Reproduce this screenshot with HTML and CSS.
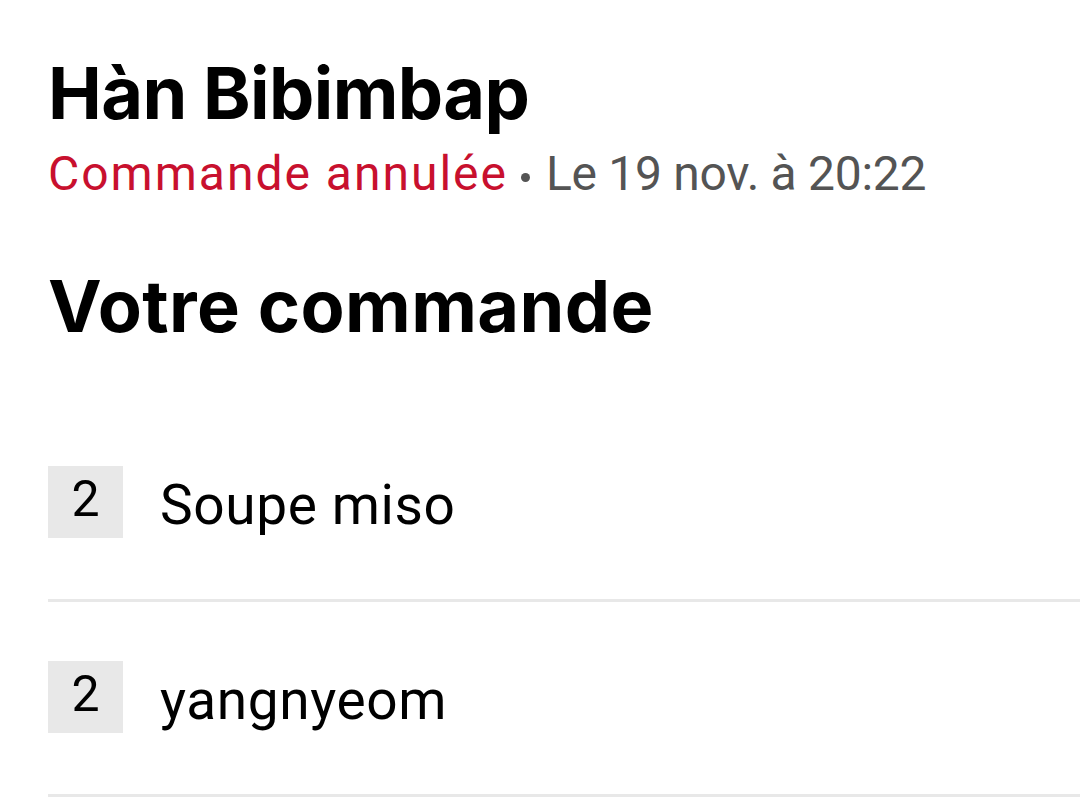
FILE: index.html
```html
<!DOCTYPE html>
<html lang="fr">
<head>
<meta charset="utf-8">
<link rel="stylesheet" href="styles.css">
</head>
<body>
<main class="page">
  <header class="head">
    <h1 class="title">Hàn Bibimbap</h1>
    <p class="meta"><span class="status">Commande annulée</span><span class="dot" aria-hidden="true"></span><span class="date">Le 19 nov. à 20:22</span></p>
  </header>
  <h2 class="section">Votre commande</h2>
  <ul class="items">
    <li class="item"><span class="qty">2</span><span class="name">Soupe miso</span></li>
    <li class="item"><span class="qty">2</span><span class="name">yangnyeom</span></li>
  </ul>
</main>
</body>
</html>
```

FILE: styles.css
```css
html, body {
  margin: 0;
  padding: 0;
  background: #ffffff;
}
body {
  font-family: "Inter", "Noto Sans", sans-serif;
  color: #000;
  width: 1080px;
  height: 808px;
  overflow: hidden;
}
.page {
  padding: 50px 0 0 48px;
}
.title {
  margin: 0;
  font-family: "Inter", sans-serif;
  font-weight: 700;
  font-size: 72px;
  line-height: 86px;
  letter-spacing: -0.6px;
}
.meta {
  margin: 10px 0 0 0;
  font-family: "Roboto", sans-serif;
  font-size: 48px;
  line-height: 56px;
  color: #545454;
  white-space: nowrap;
}
.status {
  color: #c8102e;
  letter-spacing: 2px;
}
.date {
  letter-spacing: -0.3px;
}
.dot {
  display: inline-block;
  vertical-align: baseline;
  width: 9px;
  height: 9px;
  border-radius: 50%;
  background: #545454;
  margin: 0 16px 8px 13px;
}
.section {
  margin: 61px 0 0 0;
  font-family: "Inter", sans-serif;
  font-weight: 700;
  font-size: 72px;
  line-height: 86px;
  letter-spacing: 0.4px;
}
.items {
  list-style: none;
  margin: 117px 0 0 0;
  padding: 0;
}
.item {
  display: flex;
  align-items: center;
  gap: 37px;
  padding-bottom: 61px;
  border-bottom: 3px solid #e8e8e8;
  margin-bottom: 59px;
}
.qty {
  width: 75px;
  height: 72px;
  padding-bottom: 6px;
  box-sizing: border-box;
  background: #e8e8e8;
  display: flex;
  align-items: center;
  justify-content: center;
  font-family: "Roboto", sans-serif;
  font-size: 50px;
  color: #000;
}
.name {
  font-family: "Roboto", sans-serif;
  font-size: 55px;
  letter-spacing: 0.6px;
  padding-top: 6px;
  color: #000;
}
```
